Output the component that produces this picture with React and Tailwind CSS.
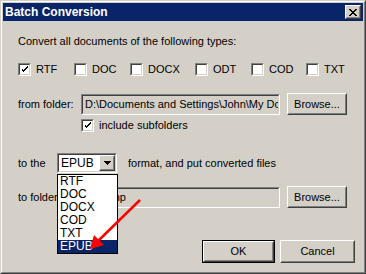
import React from 'react';

const FONT = { fontFamily: '"Liberation Sans", Arial, sans-serif' };

const TYPES = [
    { label: 'RTF', checked: true, w: 'w-[56px]' },
    { label: 'DOC', checked: false, w: 'w-[56px]' },
    { label: 'DOCX', checked: false, w: 'w-[65px]' },
    { label: 'ODT', checked: false, w: 'w-[56px]' },
    { label: 'COD', checked: false, w: 'w-[55px]' },
    { label: 'TXT', checked: false, w: 'w-auto' },
];

const LIST = ['RTF', 'DOC', 'DOCX', 'COD', 'TXT', 'EPUB'];

function Sunken({ className = '', children }) {
    return (
        <div className={`shrink-0 border border-t-[#808080] border-l-[#808080] border-b-white border-r-white ${className}`}>
            <div className="w-full h-full border border-t-[#404040] border-l-[#404040] border-b-[#d4d0c8] border-r-[#d4d0c8] overflow-hidden">
                {children}
            </div>
        </div>
    );
}

function Raised({ className = '', children, inner = '' }) {
    return (
        <div className={`shrink-0 border border-t-white border-l-white border-b-[#404040] border-r-[#404040] ${className}`}>
            <div className={`w-full h-full border border-t-[#d4d0c8] border-l-[#d4d0c8] border-b-[#808080] border-r-[#808080] flex items-center justify-center ${inner}`}>
                {children}
            </div>
        </div>
    );
}

function Checkbox({ checked }) {
    return (
        <Sunken className="w-[13px] h-[13px]">
            <div className="w-full h-full bg-white flex items-center justify-center">
                {checked && (
                    <svg width="7" height="7" viewBox="0 0 7 7" shapeRendering="crispEdges">
                        <path d="M0 2h1v3h1v1h1v-1h1v-1h1v-1h1v-1h1v-2h-1v1h-1v1h-1v1h-1v1h-1v-1h-1v-1h-1z" fill="#000" />
                    </svg>
                )}
            </div>
        </Sunken>
    );
}

function Button({ children, className = '' }) {
    return (
        <Raised className={className}>
            <span className="text-[11px] text-black leading-none">{children}</span>
        </Raised>
    );
}

export default function App() {
    return (
        <div className="w-[366px] h-[274px] bg-[#d4d0c8] text-black text-[11px]" style={FONT}>
            <div className="relative w-full h-full border border-t-[#d4d0c8] border-l-[#d4d0c8] border-b-[#404040] border-r-[#404040]">
                <div className="w-full h-full border border-t-white border-l-white border-b-[#808080] border-r-[#808080] p-px flex flex-col">
                    {/* Title bar */}
                    <div className="h-[18px] bg-[#0a246a] flex items-center pl-[2px] pr-[2px]">
                        <span className="text-white font-bold text-[12px] leading-none">Batch Conversion</span>
                        <Raised className="ml-auto w-[16px] h-[14px]" inner="bg-[#d4d0c8]">
                            <svg width="8" height="7" viewBox="0 0 8 7" shapeRendering="crispEdges">
                                <path d="M0 0h2v1h1v1h2v-1h1v-1h2v1h-1v1h-1v1h-1v1h1v1h1v1h1v1h-2v-1h-1v-1h-2v1h-1v1h-2v-1h1v-1h1v-1h1v-1h-1v-1h-1z" fill="#000" />
                            </svg>
                        </Raised>
                    </div>

                    {/* Body */}
                    <div className="flex flex-col pl-[15px] leading-[13px]">
                        <div className="mt-[14px]">Convert all documents of the following types:</div>

                        <div className="mt-[15px] flex items-center h-[13px]">
                            {TYPES.map(t => (
                                <div key={t.label} className={`flex items-center gap-[5px] ${t.w}`}>
                                    <Checkbox checked={t.checked} />
                                    <span>{t.label}</span>
                                </div>
                            ))}
                        </div>

                        <div className="mt-[17px] flex items-center h-[22px]">
                            <span className="w-[63px] shrink-0">from folder:</span>
                            <Sunken className="w-[199px] h-[21px]">
                                <div className="h-full flex items-center pl-[2px] whitespace-nowrap">D:\Documents and Settings\John\My Documents</div>
                            </Sunken>
                            <Button className="ml-[7px] w-[60px] h-[22px]">Browse...</Button>
                        </div>

                        <div className="mt-[4px] ml-[63px] flex items-center gap-[5px] h-[13px]">
                            <Checkbox checked />
                            <span>include subfolders</span>
                        </div>

                        <div className="mt-[21px] flex items-center h-[20px]">
                            <span className="w-[39px] shrink-0">to the</span>
                            <Sunken className="w-[60px] h-[20px]">
                                <div className="w-full h-full bg-white flex items-center">
                                    <span className="pl-[2px] text-[12px]">EPUB</span>
                                    <Raised className="ml-auto w-[16px] h-[16px]" inner="bg-[#d4d0c8]">
                                        <svg width="7" height="4" viewBox="0 0 7 4" shapeRendering="crispEdges">
                                            <path d="M0 0h7v1h-1v1h-1v1h-1v1h-1v-1h-1v-1h-1v-1h-1z" fill="#000" />
                                        </svg>
                                    </Raised>
                                </div>
                            </Sunken>
                            <span className="ml-[11px]">format, and put converted files</span>
                        </div>

                        <div className="mt-[13px] flex items-center h-[22px]">
                            <span className="w-[63px] shrink-0">to folder:</span>
                            <Sunken className="w-[199px] h-[21px]">
                                <div className="h-full flex items-center pl-[2px] whitespace-nowrap">C:\Temp</div>
                            </Sunken>
                            <Button className="ml-[7px] w-[60px] h-[22px]">Browse...</Button>
                        </div>

                        <div className="mt-[32px] flex items-center pl-[184px] gap-[5px]">
                            <div className="border border-black">
                                <Button className="w-[71px] h-[21px]">OK</Button>
                            </div>
                            <Button className="w-[75px] h-[23px]">Cancel</Button>
                        </div>
                    </div>
                </div>

                {/* Open dropdown list */}
                <div className="absolute left-[56px] top-[173px] w-[61px] h-[80px] bg-white border border-black flex flex-col text-[12px] leading-[13px]">
                    {LIST.map(item => (
                        <div
                            key={item}
                            className={`h-[13px] pl-[2px] ${item === 'EPUB' ? 'bg-[#0a246a] text-white' : 'text-black'}`}
                        >
                            {item}
                        </div>
                    ))}
                </div>

                {/* Red arrow */}
                <svg className="absolute left-0 top-0 pointer-events-none" width="366" height="274">
                    <line x1="139" y1="199" x2="96" y2="241" stroke="#ff0000" strokeWidth="2.5" />
                    <polygon points="89,248 93,234 103,244" fill="#ff0000" />
                </svg>
            </div>
        </div>
    );
}
